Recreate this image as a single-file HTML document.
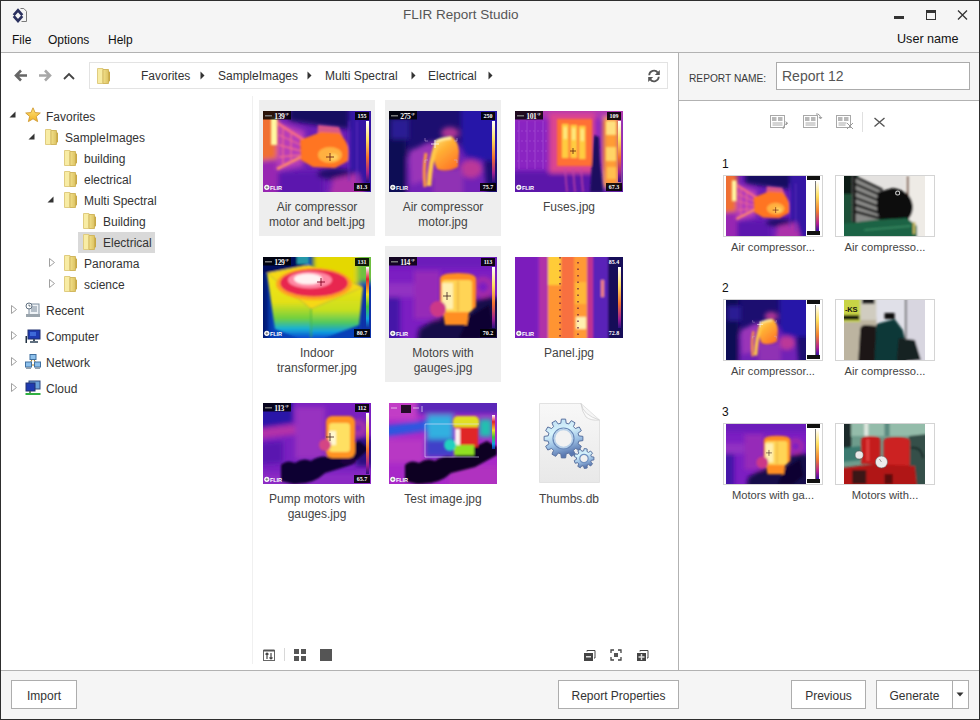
<!DOCTYPE html>
<html><head><meta charset="utf-8">
<style>
*{box-sizing:border-box}
html,body{margin:0;padding:0}
body{width:980px;height:720px;overflow:hidden;position:relative;background:#f5f5f5;font-family:"Liberation Sans",sans-serif;color:#333}
.a{position:absolute}
.t{position:absolute;white-space:nowrap;font-size:12px;line-height:12px}
svg{display:block;overflow:hidden}
.ov{font-family:"Liberation Sans",sans-serif;font-weight:bold}
</style></head><body>

<svg width="0" height="0" style="position:absolute;left:0;top:0"><defs>
<filter id="bA" x="-20%" y="-20%" width="140%" height="140%"><feGaussianBlur stdDeviation="1.3"/></filter>
<filter id="bB" x="-20%" y="-20%" width="140%" height="140%"><feGaussianBlur stdDeviation="2.6"/></filter>
<filter id="bC" x="-20%" y="-20%" width="140%" height="140%"><feGaussianBlur stdDeviation="0.8"/></filter>
<symbol id="s1" viewBox="0 0 108 81">
<rect width="108" height="81" fill="#6e1eb6"/>
<g filter="url(#bB)">
 <path d="M26 -5 L100 -5 L100 20 L60 15 L26 10Z" fill="#140860"/>
 <rect x="86" y="-5" width="27" height="90" fill="#3412a4"/>
 <path d="M-5 62 L60 60 L60 86 L-5 86Z" fill="#5c18ae"/>
 <path d="M-5 -5 L15 -5 L15 48 L-5 52Z" fill="#f07030"/>
 <path d="M-5 50 L15 48 L15 86 L-5 86Z" fill="#9826b2"/>
 <path d="M14 10 L42 20 L40 55 L14 60Z" fill="#b83cb8"/>
 <ellipse cx="72" cy="63" rx="18" ry="6" fill="#220a6c"/>
 <path d="M70 68 L95 62 L102 86 L66 86Z" fill="#ac32aa"/>
</g>
<g filter="url(#bA)">
 <rect x="8" y="6" width="6" height="28" fill="#fff8a0"/>
 <path d="M14 12 L41 29" stroke="#f46a88" stroke-width="3"/>
 <path d="M14 58 L38 46" stroke="#ff8a6a" stroke-width="3"/>
 <path d="M16 24 L38 34 M16 34 L38 40 M16 46 L38 44 M20 16 L20 56 M28 20 L28 52" stroke="#f06a90" stroke-width="1.3"/>
 <path d="M55 14 L76 16 L80 26 L54 27Z" fill="#d85888"/>
 <path d="M37 29 L58 21 L76 22 Q89 34 85 50 L72 57 L50 56 L38 49Z" fill="#ff7424"/>
 <ellipse cx="67" cy="44" rx="12" ry="8" fill="#ffb040"/>
 <ellipse cx="70" cy="46" rx="5" ry="3.5" fill="#ffd060"/>
 <path d="M86 10 V70 M94 10 V75" stroke="#6a30c0" stroke-width="1"/>
</g>
<path d="M63 46 H71 M67 42 V50" stroke="#702010" stroke-width=".9"/>
</symbol>
<symbol id="ovs1" viewBox="0 0 108 81">
<linearGradient id="bars1" x1="0" y1="0" x2="0" y2="1"><stop offset="0" stop-color="#fff"/><stop offset=".3" stop-color="#ffe060"/><stop offset=".6" stop-color="#f07030"/><stop offset=".85" stop-color="#a02090"/><stop offset="1" stop-color="#301080"/></linearGradient>
<rect x="0" y="0" width="28" height="8.5" fill="#000" opacity=".82"/>
<rect x="2" y="4" width="7" height="1.5" fill="#777"/>
<text x="11.3" y="7.9" font-size="7.6" fill="#f4f4f4" font-family="Liberation Serif" font-weight="bold" letter-spacing="-.45">139</text>
<text x="22" y="4.6" font-size="3.6" fill="#ddd" font-family="Liberation Sans" font-weight="bold">°F</text>
<rect x="92" y="1" width="14" height="8" fill="#000" opacity=".88"/>
<text x="99" y="7.3" font-size="6" fill="#fff" text-anchor="middle" font-family="Liberation Serif" font-weight="bold">155</text>
<rect x="103" y="10" width="3" height="61" fill="url(#bars1)"/>
<rect x="91" y="72" width="16" height="8" fill="#000" opacity=".88"/>
<text x="99" y="78.3" font-size="6" fill="#fff" text-anchor="middle" font-family="Liberation Serif" font-weight="bold">81.3</text>
<circle cx="3.8" cy="76.3" r="2.6" fill="#fff"/><path d="M2.3 76.3 H5.3 M3.8 74.8 V77.8" stroke="#444" stroke-width=".6"/>
<text x="7" y="78.6" font-size="5.6" fill="#fff" class="ov" letter-spacing="-.15">FLIR</text>
</symbol>
<symbol id="s2" viewBox="0 0 108 81">
<rect width="108" height="81" fill="#1c0e70"/>
<g filter="url(#bB)">
 <rect x="-5" y="-5" width="22" height="90" fill="#100a54"/>
 <rect x="2" y="8" width="18" height="20" fill="#2c1a94"/>
 <rect x="72" y="-5" width="40" height="55" fill="#2814a8"/>
 <path d="M18 46 L36 32 L68 30 L76 46 L95 50 L98 86 L18 86Z" fill="#7220b6"/>
 <path d="M20 40 L44 30 L46 66 L22 74Z" fill="#9a34b8"/>
 <ellipse cx="61" cy="22" rx="9" ry="6" fill="#ac3494"/>
 <ellipse cx="82" cy="58" rx="11" ry="9" fill="#bc3898"/>
 <rect x="44" y="58" width="30" height="26" fill="#9030b4"/>
</g>
<linearGradient id="s2m" x1="0" y1="0" x2=".6" y2="1"><stop offset="0" stop-color="#ffe878"/><stop offset=".45" stop-color="#ffb034"/><stop offset="1" stop-color="#ff7a28"/></linearGradient>
<g filter="url(#bA)">
 <path d="M44 36 Q50 27 62 25 Q69 29 70 40 L69 56 Q58 62 48 58 Q44 50 44 36Z" fill="url(#s2m)"/>
 <path d="M37 42 Q34 58 36 76" stroke="#ff9a40" stroke-width="3" fill="none"/>
 <path d="M48 32 Q41 50 40 75" stroke="#ffc848" stroke-width="4.5" fill="none"/>
 <path d="M46 31 Q54 27 62 27" stroke="#fff0a0" stroke-width="3" fill="none"/>
</g>
<path d="M42 33 H50 M46 29 V37" stroke="#fff" stroke-width=".8"/>
<path d="M36 27 V30 H39 M68 27 V30 H65 M36 52 V49 H39 M68 52 V49 H65" stroke="#d0b0e0" stroke-width=".5" fill="none"/>
</symbol>
<symbol id="ovs2" viewBox="0 0 108 81">
<linearGradient id="bars2" x1="0" y1="0" x2="0" y2="1"><stop offset="0" stop-color="#fff"/><stop offset=".3" stop-color="#ffe060"/><stop offset=".6" stop-color="#f07030"/><stop offset=".85" stop-color="#a02090"/><stop offset="1" stop-color="#301080"/></linearGradient>
<rect x="0" y="0" width="28" height="8.5" fill="#000" opacity=".82"/>
<rect x="2" y="4" width="7" height="1.5" fill="#777"/>
<text x="11.3" y="7.9" font-size="7.6" fill="#f4f4f4" font-family="Liberation Serif" font-weight="bold" letter-spacing="-.45">275</text>
<text x="22" y="4.6" font-size="3.6" fill="#ddd" font-family="Liberation Sans" font-weight="bold">°F</text>
<rect x="92" y="1" width="14" height="8" fill="#000" opacity=".88"/>
<text x="99" y="7.3" font-size="6" fill="#fff" text-anchor="middle" font-family="Liberation Serif" font-weight="bold">250</text>
<rect x="103" y="10" width="3" height="61" fill="url(#bars2)"/>
<rect x="91" y="72" width="16" height="8" fill="#000" opacity=".88"/>
<text x="99" y="78.3" font-size="6" fill="#fff" text-anchor="middle" font-family="Liberation Serif" font-weight="bold">75.7</text>
<circle cx="3.8" cy="76.3" r="2.6" fill="#fff"/><path d="M2.3 76.3 H5.3 M3.8 74.8 V77.8" stroke="#444" stroke-width=".6"/>
<text x="7" y="78.6" font-size="5.6" fill="#fff" class="ov" letter-spacing="-.15">FLIR</text>
</symbol>
<symbol id="s3" viewBox="0 0 108 81">
<rect width="108" height="81" fill="#8a24c2"/>
<g filter="url(#bB)">
 <rect x="-5" y="-5" width="118" height="12" fill="#b038b0"/>
 <rect x="-5" y="60" width="118" height="26" fill="#5c16aa"/>
 <rect x="34" y="2" width="46" height="60" fill="#dc4490"/>
 <rect x="88" y="6" width="16" height="70" fill="#ff9c34"/>
</g>
<g stroke="#b060d8" stroke-width=".7" opacity=".7">
 <path d="M4 10 V58 M12 10 V58 M20 10 V58 M28 10 V58"/>
 <path d="M2 20 H32 M2 30 H32 M2 40 H32 M2 50 H32" stroke-dasharray="2 2"/>
</g>
<g filter="url(#bA)">
 <rect x="42" y="8" width="35" height="47" fill="#ff7034"/>
 <rect x="47" y="13" width="6.5" height="34" fill="#ffcc40"/>
 <rect x="55.5" y="14" width="6.5" height="33" fill="#ffcc40"/>
 <rect x="64" y="15" width="6.5" height="33" fill="#ffcc40"/>
 <rect x="48.5" y="16" width="3.5" height="12" fill="#ffe880"/>
 <rect x="57" y="17" width="3.5" height="12" fill="#ffe880"/>
 <rect x="65.5" y="18" width="3.5" height="12" fill="#ffe880"/>
 <path d="M79 24 L84 26 L85 50 L88 81 L75 81 L77 50Z" fill="#1e0e5e"/>
 <rect x="91" y="10" width="10" height="14" fill="#ffe080"/>
 <rect x="91" y="36" width="10" height="14" fill="#ffd466"/>
 <rect x="92" y="56" width="9" height="12" fill="#ffc050"/>
 <path d="M50 58 L52 81 M58 58 L60 81 M66 58 L68 81" stroke="#c444a4" stroke-width="1.4"/>
</g>
<path d="M55 40 H61 M58 37 V43" stroke="#602010" stroke-width=".8"/>
</symbol>
<symbol id="ovs3" viewBox="0 0 108 81">
<linearGradient id="bars3" x1="0" y1="0" x2="0" y2="1"><stop offset="0" stop-color="#fff"/><stop offset=".3" stop-color="#ffe060"/><stop offset=".6" stop-color="#f07030"/><stop offset=".85" stop-color="#a02090"/><stop offset="1" stop-color="#301080"/></linearGradient>
<rect x="0" y="0" width="28" height="8.5" fill="#000" opacity=".82"/>
<rect x="2" y="4" width="7" height="1.5" fill="#777"/>
<text x="11.3" y="7.9" font-size="7.6" fill="#f4f4f4" font-family="Liberation Serif" font-weight="bold" letter-spacing="-.45">101</text>
<text x="22" y="4.6" font-size="3.6" fill="#ddd" font-family="Liberation Sans" font-weight="bold">°F</text>
<rect x="92" y="1" width="14" height="8" fill="#000" opacity=".88"/>
<text x="99" y="7.3" font-size="6" fill="#fff" text-anchor="middle" font-family="Liberation Serif" font-weight="bold">109</text>
<rect x="103" y="10" width="3" height="61" fill="url(#bars3)"/>
<rect x="91" y="72" width="16" height="8" fill="#000" opacity=".88"/>
<text x="99" y="78.3" font-size="6" fill="#fff" text-anchor="middle" font-family="Liberation Serif" font-weight="bold">67.3</text>
<circle cx="3.8" cy="76.3" r="2.6" fill="#fff"/><path d="M2.3 76.3 H5.3 M3.8 74.8 V77.8" stroke="#444" stroke-width=".6"/>
<text x="7" y="78.6" font-size="5.6" fill="#fff" class="ov" letter-spacing="-.15">FLIR</text>
</symbol>
<symbol id="s4" viewBox="0 0 108 81">
<linearGradient id="s4l" gradientUnits="userSpaceOnUse" x1="0" y1="16" x2="0" y2="81"><stop offset="0" stop-color="#f4e414"/><stop offset=".45" stop-color="#e4e018"/><stop offset=".7" stop-color="#70d040"/><stop offset=".86" stop-color="#18b0d8"/><stop offset="1" stop-color="#0848d0"/></linearGradient>
<linearGradient id="s4f" gradientUnits="userSpaceOnUse" x1="0" y1="30" x2="0" y2="81"><stop offset="0" stop-color="#f0e010"/><stop offset=".45" stop-color="#c8e020"/><stop offset=".7" stop-color="#50c860"/><stop offset=".88" stop-color="#10a0e0"/><stop offset="1" stop-color="#0a50d0"/></linearGradient>
<rect width="108" height="81" fill="#0840b8"/>
<g filter="url(#bB)">
 <rect x="50" y="-5" width="46" height="34" fill="#e4d800"/>
 <rect x="94" y="-5" width="19" height="30" fill="#70c040"/>
 <rect x="96" y="28" width="17" height="58" fill="#0830a8"/>
 <rect x="-5" y="-5" width="10" height="90" fill="#001870"/>
</g>
<g filter="url(#bC)">
 <path d="M-5 -5 L42 -5 L42 9 L4 16 L-5 16Z" fill="#000c5c"/>
 <rect x="34" y="-5" width="12" height="12" fill="#2898a8"/>
 <path d="M4 16 L48 52 L48 86 L12 72 Z" fill="url(#s4l)"/>
 <path d="M48 52 L100 30 L96 68 L48 86Z" fill="url(#s4f)"/>
 <path d="M4 16 L46 8 L100 30 L48 52Z" fill="#f6d818"/>
</g>
<g filter="url(#bA)">
 <ellipse cx="51" cy="27" rx="38" ry="16" fill="#ffa024"/>
 <ellipse cx="51" cy="26" rx="34" ry="13.5" fill="#e82650"/>
 <ellipse cx="47" cy="23" rx="22" ry="8.5" fill="#ff88a4"/>
 <ellipse cx="45" cy="22" rx="14" ry="5.5" fill="#fff2f2"/>
 <path d="M48 52 V81" stroke="#40b040" stroke-width="1"/>
</g>
<path d="M54 25 H62 M58 21 V29" stroke="#800020" stroke-width=".9"/>
</symbol>
<symbol id="ovs4" viewBox="0 0 108 81">
<linearGradient id="bars4" x1="0" y1="0" x2="0" y2="1"><stop offset="0" stop-color="#fff"/><stop offset=".2" stop-color="#e02030"/><stop offset=".45" stop-color="#f0e020"/><stop offset=".65" stop-color="#40c040"/><stop offset=".85" stop-color="#10a0e0"/><stop offset="1" stop-color="#1030a0"/></linearGradient>
<rect x="0" y="0" width="28" height="8.5" fill="#000" opacity=".82"/>
<rect x="2" y="4" width="7" height="1.5" fill="#777"/>
<text x="11.3" y="7.9" font-size="7.6" fill="#f4f4f4" font-family="Liberation Serif" font-weight="bold" letter-spacing="-.45">129</text>
<text x="22" y="4.6" font-size="3.6" fill="#ddd" font-family="Liberation Sans" font-weight="bold">°F</text>
<rect x="92" y="1" width="14" height="8" fill="#000" opacity=".88"/>
<text x="99" y="7.3" font-size="6" fill="#fff" text-anchor="middle" font-family="Liberation Serif" font-weight="bold">131</text>
<rect x="103" y="10" width="3" height="61" fill="url(#bars4)"/>
<rect x="91" y="72" width="16" height="8" fill="#000" opacity=".88"/>
<text x="99" y="78.3" font-size="6" fill="#fff" text-anchor="middle" font-family="Liberation Serif" font-weight="bold">80.7</text>
<circle cx="3.8" cy="76.3" r="2.6" fill="#fff"/><path d="M2.3 76.3 H5.3 M3.8 74.8 V77.8" stroke="#444" stroke-width=".6"/>
<text x="7" y="78.6" font-size="5.6" fill="#fff" class="ov" letter-spacing="-.15">FLIR</text>
</symbol>
<symbol id="s5" viewBox="0 0 108 81">
<rect width="108" height="81" fill="#7c1ec2"/>
<g filter="url(#bB)">
 <rect x="-5" y="-5" width="118" height="16" fill="#6c1aba"/>
 <path d="M30 72 L70 48 L100 40 L113 42 L113 86 L28 86Z" fill="#140848"/>
 <rect x="-5" y="40" width="16" height="46" fill="#4414a8"/>
 <rect x="-5" y="26" width="30" height="14" fill="#9232c2"/>
 <rect x="25" y="14" width="26" height="48" fill="#962ab8"/>
 <ellipse cx="94" cy="30" rx="8" ry="8" fill="none" stroke="#c83494" stroke-width="3"/>
</g>
<g filter="url(#bA)">
 <path d="M80 60 L100 48 L104 70 L90 81 L70 81Z" fill="#0c0430"/>
 <path d="M51 22 Q51 16 69 16 Q87 16 87 22 L87 50 L80 56 L78 68 L56 68 L54 56 L51 52Z" fill="#ff8e22"/>
 <rect x="53" y="23" width="30" height="32" rx="3" fill="#ffd454"/>
 <rect x="53" y="26" width="11" height="26" fill="#fff0b0"/>
 <path d="M69 24 V54" stroke="#e0a040" stroke-width="1"/>
 <circle cx="49" cy="52" r="8" fill="#cc3888"/>
</g>
<path d="M54 39 H62 M58 35 V43" stroke="#402020" stroke-width=".8"/>
</symbol>
<symbol id="ovs5" viewBox="0 0 108 81">
<linearGradient id="bars5" x1="0" y1="0" x2="0" y2="1"><stop offset="0" stop-color="#fff"/><stop offset=".3" stop-color="#ffe060"/><stop offset=".6" stop-color="#f07030"/><stop offset=".85" stop-color="#a02090"/><stop offset="1" stop-color="#301080"/></linearGradient>
<rect x="0" y="0" width="28" height="8.5" fill="#000" opacity=".82"/>
<rect x="2" y="4" width="7" height="1.5" fill="#777"/>
<text x="11.3" y="7.9" font-size="7.6" fill="#f4f4f4" font-family="Liberation Serif" font-weight="bold" letter-spacing="-.45">114</text>
<text x="22" y="4.6" font-size="3.6" fill="#ddd" font-family="Liberation Sans" font-weight="bold">°F</text>
<rect x="92" y="1" width="14" height="8" fill="#000" opacity=".88"/>
<text x="99" y="7.3" font-size="6" fill="#fff" text-anchor="middle" font-family="Liberation Serif" font-weight="bold">113</text>
<rect x="103" y="10" width="3" height="61" fill="url(#bars5)"/>
<rect x="91" y="72" width="16" height="8" fill="#000" opacity=".88"/>
<text x="99" y="78.3" font-size="6" fill="#fff" text-anchor="middle" font-family="Liberation Serif" font-weight="bold">70.2</text>
<circle cx="3.8" cy="76.3" r="2.6" fill="#fff"/><path d="M2.3 76.3 H5.3 M3.8 74.8 V77.8" stroke="#444" stroke-width=".6"/>
<text x="7" y="78.6" font-size="5.6" fill="#fff" class="ov" letter-spacing="-.15">FLIR</text>
</symbol>
<symbol id="s6" viewBox="0 0 108 81">
<rect width="108" height="81" fill="#8420c0"/>
<g filter="url(#bC)">
 <rect x="-2" y="-2" width="24" height="85" fill="#7c1cbc"/>
 <rect x="24" y="-2" width="9" height="85" fill="#b030a8"/>
 <rect x="33" y="-2" width="13" height="85" fill="#ff9432"/>
 <rect x="33" y="-2" width="13" height="30" fill="#ffcc38"/>
 <rect x="46" y="-2" width="13" height="85" fill="#f87040"/>
 <rect x="59" y="-2" width="13" height="85" fill="#ff9a34"/>
 <rect x="60" y="25" width="11" height="22" fill="#ffb838"/>
 <rect x="61" y="60" width="10" height="12" fill="#fff0b0"/>
 <rect x="72" y="-2" width="6" height="85" fill="#c03090"/>
 <rect x="78" y="-2" width="15" height="85" fill="#5a20b8"/>
 <rect x="93" y="-2" width="17" height="85" fill="#140a58"/>
 <rect x="86" y="23" width="3" height="17" fill="#f08080"/>
</g>
<path d="M45 0 V81 M63 5 V81" stroke="#601040" stroke-width="1.2" stroke-dasharray="1.5 5"/>
</symbol>
<symbol id="ovs6" viewBox="0 0 108 81">
<linearGradient id="bars6" x1="0" y1="0" x2="0" y2="1"><stop offset="0" stop-color="#fff"/><stop offset=".3" stop-color="#ffe060"/><stop offset=".6" stop-color="#f07030"/><stop offset=".85" stop-color="#a02090"/><stop offset="1" stop-color="#301080"/></linearGradient>
<text x="99" y="7.3" font-size="6" fill="#fff" text-anchor="middle" font-family="Liberation Serif" font-weight="bold">85.4</text>
<rect x="103" y="10" width="3" height="61" fill="url(#bars6)"/>
<text x="99" y="78.3" font-size="6" fill="#fff" text-anchor="middle" font-family="Liberation Serif" font-weight="bold">72.8</text>
<circle cx="3.8" cy="76.3" r="2.6" fill="#fff"/><path d="M2.3 76.3 H5.3 M3.8 74.8 V77.8" stroke="#444" stroke-width=".6"/><text x="7" y="78.6" font-size="5.6" fill="#fff" class="ov" letter-spacing="-.15">FLIR</text>
</symbol>
<symbol id="s7" viewBox="0 0 108 81">
<rect width="108" height="81" fill="#7a20c0"/>
<g filter="url(#bB)">
 <path d="M-5 -5 L30 -5 L30 20 L-5 26Z" fill="#2c12a8"/>
 <path d="M-5 26 L62 18 L62 28 L-5 36Z" fill="#b432a8"/>
 <rect x="32" y="4" width="30" height="52" fill="#9830c0"/>
 <path d="M-5 40 L20 38 L20 60 L-5 62Z" fill="#5a18b0"/>
 <rect x="93" y="35" width="17" height="28" fill="#2a1080"/>
 <circle cx="95" cy="25" r="6" fill="none" stroke="#c44494" stroke-width="3"/>
 <rect x="-5" y="70" width="118" height="16" fill="#8c2cc4"/>
</g>
<g filter="url(#bA)">
 <path d="M18 62 Q24 56 32 60 Q40 54 48 58 Q56 52 66 54 L96 38 L106 46 L88 62 L62 70 Q50 82 30 81 L18 78Z" fill="#100230"/>
 <ellipse cx="85" cy="58" rx="8" ry="4" fill="#1a0640"/>
 <rect x="63" y="13" width="29" height="42" rx="6" fill="#ff9222"/>
 <rect x="66" y="20" width="21" height="29" rx="3" fill="#ffe062"/>
 <rect x="66" y="28" width="7" height="14" fill="#fff8d0"/>
 <circle cx="62" cy="42" r="6" fill="#d44484"/>
</g>
<path d="M63 34 H71 M67 30 V38" stroke="#402020" stroke-width=".8"/>
</symbol>
<symbol id="ovs7" viewBox="0 0 108 81">
<linearGradient id="bars7" x1="0" y1="0" x2="0" y2="1"><stop offset="0" stop-color="#fff"/><stop offset=".3" stop-color="#ffe060"/><stop offset=".6" stop-color="#f07030"/><stop offset=".85" stop-color="#a02090"/><stop offset="1" stop-color="#301080"/></linearGradient>
<rect x="0" y="0" width="28" height="8.5" fill="#000" opacity=".82"/>
<rect x="2" y="4" width="7" height="1.5" fill="#777"/>
<text x="11.3" y="7.9" font-size="7.6" fill="#f4f4f4" font-family="Liberation Serif" font-weight="bold" letter-spacing="-.45">113</text>
<text x="22" y="4.6" font-size="3.6" fill="#ddd" font-family="Liberation Sans" font-weight="bold">°F</text>
<rect x="92" y="1" width="14" height="8" fill="#000" opacity=".88"/>
<text x="99" y="7.3" font-size="6" fill="#fff" text-anchor="middle" font-family="Liberation Serif" font-weight="bold">112</text>
<rect x="103" y="10" width="3" height="61" fill="url(#bars7)"/>
<rect x="91" y="72" width="16" height="8" fill="#000" opacity=".88"/>
<text x="99" y="78.3" font-size="6" fill="#fff" text-anchor="middle" font-family="Liberation Serif" font-weight="bold">65.7</text>
<circle cx="3.8" cy="76.3" r="2.6" fill="#fff"/><path d="M2.3 76.3 H5.3 M3.8 74.8 V77.8" stroke="#444" stroke-width=".6"/>
<text x="7" y="78.6" font-size="5.6" fill="#fff" class="ov" letter-spacing="-.15">FLIR</text>
</symbol>
<symbol id="s8" viewBox="0 0 108 81">
<rect width="108" height="81" fill="#a828c8"/>
<g filter="url(#bB)">
 <rect x="28" y="-5" width="85" height="16" fill="#5a26b8"/>
 <rect x="-5" y="-5" width="33" height="22" fill="#c23cc6"/>
 <path d="M-5 23 L40 17 L40 27 L-5 34Z" fill="#2a58e0"/>
 <rect x="-5" y="36" width="40" height="24" fill="#b838c4"/>
 <rect x="38" y="12" width="26" height="28" fill="#30b0e0"/>
 <rect x="36" y="36" width="30" height="18" fill="#4040c8"/>
 <rect x="90" y="16" width="13" height="18" fill="#20c0b0"/>
 <rect x="60" y="62" width="50" height="22" fill="#b030c0"/>
</g>
<g filter="url(#bA)">
 <path d="M16 62 Q22 56 30 60 Q38 54 46 58 Q54 52 64 54 L98 38 L108 44 L108 52 L86 64 L62 70 Q50 82 28 81 L16 78Z" fill="#080020"/>
 <rect x="64" y="13" width="26" height="13" rx="5" fill="#e0e020"/>
 <rect x="66" y="24" width="23" height="20" fill="#e02828"/>
 <rect x="66" y="26" width="5" height="16" fill="#fff0f0"/>
 <rect x="65" y="42" width="20" height="10" fill="#90e020"/>
 <circle cx="61" cy="42" r="6" fill="#20d0c0"/>
</g>
<path d="M36 21 H90 M36 54 H90 M36 21 V54" stroke="#e0e0ff" stroke-width=".6" fill="none"/>
<rect x="12" y="2" width="10" height="8" fill="#000" opacity=".8"/>
<path d="M2 5 H8 M24 5 H30 M33 3 V9" stroke="#fff" stroke-width=".8" opacity=".8"/>
<rect x="103" y="12" width="3" height="34" fill="url(#bars4)"/>
<circle cx="3.8" cy="76.3" r="2.6" fill="#fff"/><path d="M2.3 76.3 H5.3 M3.8 74.8 V77.8" stroke="#444" stroke-width=".6"/><text x="7" y="78.6" font-size="5.6" fill="#fff" class="ov" letter-spacing="-.15">FLIR</text>
</symbol>
<symbol id="ovs8" viewBox="0 0 108 81"></symbol>
<symbol id="p1" viewBox="0 0 80 60">
<rect width="80" height="60" fill="#e4e2e0"/>
<g filter="url(#bA)">
 <rect x="60" y="-2" width="22" height="64" fill="#eeebe6"/>
 <rect x="-2" y="-2" width="16" height="64" fill="#1a5038"/>
 <rect x="-2" y="-2" width="10" height="20" fill="#0e1a16"/>
 <path d="M8 -2 L38 12 L38 44 L16 50 L8 46Z" fill="#8a8a88"/>
 <path d="M9 0 L38 14 M9 7 L38 20 M9 14 L38 26 M9 21 L38 32 M9 28 L38 38 M9 35 L38 43" stroke="#141414" stroke-width="2.4"/>
 <path d="M10 -2 L10 48" stroke="#101010" stroke-width="3"/>
 <rect x="62" y="0" width="2" height="44" fill="#7a5848"/>
 <path d="M48 12 Q66 14 68 30 Q68 46 52 48 L36 46 Q30 30 34 16Z" fill="#0a0a0a"/>
 <path d="M-2 48 L30 44 L62 42 L72 50 L72 62 L-2 62Z" fill="#1c6444"/>
 <path d="M20 54 L66 50" stroke="#3a8a64" stroke-width="1.5"/>
 <rect x="68" y="46" width="2.5" height="12" fill="#c8b860"/>
</g>
<circle cx="53" cy="17" r="2" fill="none" stroke="#ccc" stroke-width="1"/>
</symbol>
<symbol id="p2" viewBox="0 0 80 60">
<rect width="80" height="60" fill="#e0e0e8"/>
<g filter="url(#bA)">
 <rect x="62" y="-2" width="20" height="64" fill="#d8d6e0"/>
 <rect x="-2" y="18" width="34" height="44" fill="#bcb4a0"/>
 <rect x="-2" y="-2" width="34" height="22" fill="#d0ccc0"/>
 <rect x="-2" y="-2" width="18" height="24" fill="#c8d444"/>
 <rect x="-2" y="15" width="17" height="5" fill="#1c2010"/>
 <rect x="18" y="-2" width="12" height="6" fill="#222"/>
 <path d="M16 30 Q16 25 22 25 L32 26 L32 62 L14 62Z" fill="#1a1818"/>
 <path d="M32 24 L50 19 L58 30 L62 46 L62 62 L30 62Z" fill="#0e3838"/>
 <rect x="40" y="13" width="10" height="6" fill="#111"/>
 <path d="M54 38 L70 40 L76 60 L52 62Z" fill="#182222"/>
 <rect x="60.5" y="-2" width="1.5" height="42" fill="#555"/>
</g>
<text x="1" y="12" font-size="7.5" fill="#1a1a10" class="ov" letter-spacing="-.3">-KS</text>
</symbol>
<symbol id="p3" viewBox="0 0 80 60">
<rect width="80" height="60" fill="#6e9c8c"/>
<g filter="url(#bA)">
 <rect x="-2" y="-2" width="84" height="14" fill="#94bcaa"/>
 <rect x="-2" y="-2" width="9" height="27" fill="#1a2a2a"/>
 <rect x="20" y="-2" width="4" height="14" fill="#e0e8e0"/>
 <rect x="40" y="-2" width="5" height="14" fill="#5a8a80"/>
 <path d="M64 12 L82 10 L82 62 L64 62Z" fill="#34504a"/>
 <path d="M-2 24 L18 22 L18 36 L-2 38Z" fill="#3a7a70"/>
 <path d="M17 16 Q17 12 26 12 Q36 12 36 16 L36 40 L17 40Z" fill="#c41a1a"/>
 <path d="M39 17 Q39 13 52 13 Q65 13 65 17 L65 46 L39 46Z" fill="#cc2020"/>
 <rect x="22" y="15" width="3" height="22" fill="#e04040"/>
 <path d="M-2 44 L30 40 L70 42 L72 62 L-2 62Z" fill="#b01414"/>
 <rect x="8" y="46" width="14" height="14" fill="#3a1818"/>
 <rect x="40" y="50" width="8" height="10" fill="#5a1010"/>
 <path d="M66 24 Q76 22 78 34" stroke="#1a2a28" stroke-width="2" fill="none"/>
</g>
<circle cx="15" cy="31" r="4" fill="#e8e8e8" stroke="#555" stroke-width=".5"/>
<circle cx="37" cy="38" r="6" fill="#ececec" stroke="#666" stroke-width=".6"/>
<path d="M37 38 L35 35" stroke="#444" stroke-width=".5"/>
</symbol>
</defs></svg>
<div class="a" style="left:0;top:0;width:980px;height:720px;border:1px solid #2e2e2e;z-index:50"></div>
<svg class="a" style="left:0;top:0" width="30" height="30" viewBox="0 0 30 30">
  <path d="M20.5 8.5 H23.8 L26.5 11.3 V21.5 H21.5" stroke="#7a7a7a" stroke-width="1" fill="none"/>
  <path d="M14.6 14.1 L18 10.3 L21.4 14.1 M14.6 17.1 L18 20.9 L21.4 17.1" stroke="#2b315f" stroke-width="2.7" fill="none" stroke-linejoin="miter" stroke-linecap="square"/>
</svg>
<div class="t" style="left:403px;top:8px;font-size:13.5px;line-height:13.5px;color:#555;">FLIR Report Studio</div>
<div class="a" style="left:894px;top:16px;width:10px;height:3px;background:#333"></div>
<div class="a" style="left:926px;top:10px;width:10px;height:10px;border:1px solid #333;border-top-width:3px"></div>
<svg class="a" style="left:957px;top:10px" width="11" height="10" viewBox="0 0 11 10"><path d="M1 0.5 L10 9.5 M10 0.5 L1 9.5" stroke="#333" stroke-width="1.3"/></svg>
<div class="t" style="left:12px;top:34px;font-size:12px;line-height:12px;color:#111;">File</div>
<div class="t" style="left:48px;top:34px;font-size:12px;line-height:12px;color:#111;">Options</div>
<div class="t" style="left:108px;top:34px;font-size:12px;line-height:12px;color:#111;">Help</div>
<div class="t" style="left:897px;top:33px;font-size:12.6px;line-height:12.6px;color:#111;">User name</div>
<div class="a" style="left:0;top:52px;width:980px;height:1px;background:#b2b2b2"></div>
<div class="a" style="left:1px;top:53px;width:677px;height:617px;background:#fff"></div>
<div class="a" style="left:678px;top:53px;width:1px;height:617px;background:#b2b2b2"></div>
<div class="a" style="left:679px;top:53px;width:300px;height:47px;background:#f5f5f5"></div>
<div class="a" style="left:679px;top:100px;width:300px;height:1px;background:#b2b2b2"></div>
<div class="a" style="left:679px;top:101px;width:300px;height:569px;background:#fff"></div>
<div class="a" style="left:0;top:670px;width:980px;height:1px;background:#b2b2b2"></div>
<div class="a" style="left:252px;top:96px;width:1px;height:568px;background:#f0f0f0"></div>
<svg class="a" style="left:14px;top:69px" width="64" height="14" viewBox="0 0 64 14">
 <path d="M2 6.5 H13 M7 1.5 L2 6.5 L7 11.5" stroke="#666" stroke-width="2.6" fill="none"/>
 <path d="M25 6.5 H36 M31 1.5 L36 6.5 L31 11.5" stroke="#a8a8a8" stroke-width="2.6" fill="none"/>
 <path d="M50 10 L55 5 L60 10" stroke="#444" stroke-width="1.8" fill="none"/>
</svg>
<div class="a" style="left:89px;top:62px;width:579px;height:27px;border:1px solid #e3e3e3;background:#fff"></div>
<div class="a" style="left:97px;top:68px"><svg width="14" height="16" viewBox="0 0 14 16"><defs><linearGradient id="fg1" x1="0" y1="0" x2="1" y2="0"><stop offset="0" stop-color="#f2e08a"/><stop offset="1" stop-color="#dcc262"/></linearGradient></defs>
<path d="M0.5 0.5 H6 V15.5 H0.5Z" fill="#f8eca4" stroke="#e0cc80" stroke-width="1"/>
<path d="M6 1.5 H11.5 V15.5 H6Z" fill="url(#fg1)" stroke="#d2b860" stroke-width="1"/>
<path d="M11.5 3 L13 4 V13 L11.5 14Z" fill="#c8a844"/>
</svg></div>
<div class="t" style="left:141px;top:70px;font-size:12px;line-height:12px;color:#333;">Favorites</div>
<div class="t" style="left:218px;top:70px;font-size:12px;line-height:12px;color:#333;">SampleImages</div>
<div class="t" style="left:325px;top:70px;font-size:12px;line-height:12px;color:#333;">Multi Spectral</div>
<div class="t" style="left:428px;top:70px;font-size:12px;line-height:12px;color:#333;">Electrical</div>
<svg class="a" style="left:200px;top:71px" width="5" height="9" viewBox="0 0 5 9"><path d="M0.5 0.5 L4.5 4.5 L0.5 8.5Z" fill="#333"/></svg>
<svg class="a" style="left:307px;top:71px" width="5" height="9" viewBox="0 0 5 9"><path d="M0.5 0.5 L4.5 4.5 L0.5 8.5Z" fill="#333"/></svg>
<svg class="a" style="left:411px;top:71px" width="5" height="9" viewBox="0 0 5 9"><path d="M0.5 0.5 L4.5 4.5 L0.5 8.5Z" fill="#333"/></svg>
<svg class="a" style="left:488px;top:71px" width="5" height="9" viewBox="0 0 5 9"><path d="M0.5 0.5 L4.5 4.5 L0.5 8.5Z" fill="#333"/></svg>
<svg class="a" style="left:647px;top:69px" width="14" height="14" viewBox="0 0 14 14">
<path d="M2.2 6.2 A4.8 4.8 0 0 1 10.8 3.6" stroke="#555" stroke-width="1.8" fill="none"/>
<path d="M12.8 1 L12.8 6 L7.8 6 Z" fill="#555"/>
<path d="M11.8 7.8 A4.8 4.8 0 0 1 3.2 10.4" stroke="#555" stroke-width="1.8" fill="none"/>
<path d="M1.2 13 L1.2 8 L6.2 8 Z" fill="#555"/>
</svg>
<svg class="a" style="left:9px;top:111px" width="7" height="7" viewBox="0 0 7 7"><path d="M6.5 0.5 L6.5 6.5 L0.5 6.5 Z" fill="#333"/></svg>
<div class="a" style="left:25px;top:107px"><svg width="16" height="16" viewBox="0 0 16 16"><defs><linearGradient id="stg" x1="0" y1="0" x2="0" y2="1"><stop offset="0" stop-color="#ffe680"/><stop offset="1" stop-color="#f0b020"/></linearGradient></defs>
<path d="M8 0.8 L10.1 5.6 L15.3 6 L11.3 9.4 L12.6 14.6 L8 11.8 L3.4 14.6 L4.7 9.4 L0.7 6 L5.9 5.6 Z" fill="url(#stg)" stroke="#d09a30" stroke-width=".9"/></svg></div>
<div class="t" style="left:46px;top:111px;font-size:12px;line-height:12px;color:#333;">Favorites</div>
<svg class="a" style="left:28px;top:133px" width="7" height="7" viewBox="0 0 7 7"><path d="M6.5 0.5 L6.5 6.5 L0.5 6.5 Z" fill="#333"/></svg>
<div class="a" style="left:45px;top:129px"><svg width="14" height="16" viewBox="0 0 14 16"><defs><linearGradient id="fg2" x1="0" y1="0" x2="1" y2="0"><stop offset="0" stop-color="#f2e08a"/><stop offset="1" stop-color="#dcc262"/></linearGradient></defs>
<path d="M0.5 0.5 H6 V15.5 H0.5Z" fill="#f8eca4" stroke="#e0cc80" stroke-width="1"/>
<path d="M6 1.5 H11.5 V15.5 H6Z" fill="url(#fg2)" stroke="#d2b860" stroke-width="1"/>
<path d="M11.5 3 L13 4 V13 L11.5 14Z" fill="#c8a844"/>
</svg></div>
<div class="t" style="left:65px;top:132px;font-size:12px;line-height:12px;color:#333;">SampleImages</div>
<div class="a" style="left:64px;top:150px"><svg width="14" height="16" viewBox="0 0 14 16"><defs><linearGradient id="fg3" x1="0" y1="0" x2="1" y2="0"><stop offset="0" stop-color="#f2e08a"/><stop offset="1" stop-color="#dcc262"/></linearGradient></defs>
<path d="M0.5 0.5 H6 V15.5 H0.5Z" fill="#f8eca4" stroke="#e0cc80" stroke-width="1"/>
<path d="M6 1.5 H11.5 V15.5 H6Z" fill="url(#fg3)" stroke="#d2b860" stroke-width="1"/>
<path d="M11.5 3 L13 4 V13 L11.5 14Z" fill="#c8a844"/>
</svg></div>
<div class="t" style="left:84px;top:153px;font-size:12px;line-height:12px;color:#333;">building</div>
<div class="a" style="left:64px;top:171px"><svg width="14" height="16" viewBox="0 0 14 16"><defs><linearGradient id="fg4" x1="0" y1="0" x2="1" y2="0"><stop offset="0" stop-color="#f2e08a"/><stop offset="1" stop-color="#dcc262"/></linearGradient></defs>
<path d="M0.5 0.5 H6 V15.5 H0.5Z" fill="#f8eca4" stroke="#e0cc80" stroke-width="1"/>
<path d="M6 1.5 H11.5 V15.5 H6Z" fill="url(#fg4)" stroke="#d2b860" stroke-width="1"/>
<path d="M11.5 3 L13 4 V13 L11.5 14Z" fill="#c8a844"/>
</svg></div>
<div class="t" style="left:84px;top:174px;font-size:12px;line-height:12px;color:#333;">electrical</div>
<svg class="a" style="left:47px;top:196px" width="7" height="7" viewBox="0 0 7 7"><path d="M6.5 0.5 L6.5 6.5 L0.5 6.5 Z" fill="#333"/></svg>
<div class="a" style="left:64px;top:192px"><svg width="14" height="16" viewBox="0 0 14 16"><defs><linearGradient id="fg5" x1="0" y1="0" x2="1" y2="0"><stop offset="0" stop-color="#f2e08a"/><stop offset="1" stop-color="#dcc262"/></linearGradient></defs>
<path d="M0.5 0.5 H6 V15.5 H0.5Z" fill="#f8eca4" stroke="#e0cc80" stroke-width="1"/>
<path d="M6 1.5 H11.5 V15.5 H6Z" fill="url(#fg5)" stroke="#d2b860" stroke-width="1"/>
<path d="M11.5 3 L13 4 V13 L11.5 14Z" fill="#c8a844"/>
</svg></div>
<div class="t" style="left:84px;top:195px;font-size:12px;line-height:12px;color:#333;">Multi Spectral</div>
<div class="a" style="left:83px;top:213px"><svg width="14" height="16" viewBox="0 0 14 16"><defs><linearGradient id="fg6" x1="0" y1="0" x2="1" y2="0"><stop offset="0" stop-color="#f2e08a"/><stop offset="1" stop-color="#dcc262"/></linearGradient></defs>
<path d="M0.5 0.5 H6 V15.5 H0.5Z" fill="#f8eca4" stroke="#e0cc80" stroke-width="1"/>
<path d="M6 1.5 H11.5 V15.5 H6Z" fill="url(#fg6)" stroke="#d2b860" stroke-width="1"/>
<path d="M11.5 3 L13 4 V13 L11.5 14Z" fill="#c8a844"/>
</svg></div>
<div class="t" style="left:103px;top:216px;font-size:12px;line-height:12px;color:#333;">Building</div>
<div class="a" style="left:78px;top:232px;width:77px;height:21px;background:#d9d9d9"></div>
<div class="a" style="left:83px;top:234px"><svg width="14" height="16" viewBox="0 0 14 16"><defs><linearGradient id="fg7" x1="0" y1="0" x2="1" y2="0"><stop offset="0" stop-color="#f2e08a"/><stop offset="1" stop-color="#dcc262"/></linearGradient></defs>
<path d="M0.5 0.5 H6 V15.5 H0.5Z" fill="#f8eca4" stroke="#e0cc80" stroke-width="1"/>
<path d="M6 1.5 H11.5 V15.5 H6Z" fill="url(#fg7)" stroke="#d2b860" stroke-width="1"/>
<path d="M11.5 3 L13 4 V13 L11.5 14Z" fill="#c8a844"/>
</svg></div>
<div class="t" style="left:103px;top:237px;font-size:12px;line-height:12px;color:#333;">Electrical</div>
<svg class="a" style="left:49px;top:258px" width="6" height="9" viewBox="0 0 6 9"><path d="M0.5 0.5 L5.5 4.5 L0.5 8.5 Z" fill="#fff" stroke="#a0a0a0" stroke-width="1"/></svg>
<div class="a" style="left:64px;top:255px"><svg width="14" height="16" viewBox="0 0 14 16"><defs><linearGradient id="fg8" x1="0" y1="0" x2="1" y2="0"><stop offset="0" stop-color="#f2e08a"/><stop offset="1" stop-color="#dcc262"/></linearGradient></defs>
<path d="M0.5 0.5 H6 V15.5 H0.5Z" fill="#f8eca4" stroke="#e0cc80" stroke-width="1"/>
<path d="M6 1.5 H11.5 V15.5 H6Z" fill="url(#fg8)" stroke="#d2b860" stroke-width="1"/>
<path d="M11.5 3 L13 4 V13 L11.5 14Z" fill="#c8a844"/>
</svg></div>
<div class="t" style="left:84px;top:258px;font-size:12px;line-height:12px;color:#333;">Panorama</div>
<svg class="a" style="left:49px;top:279px" width="6" height="9" viewBox="0 0 6 9"><path d="M0.5 0.5 L5.5 4.5 L0.5 8.5 Z" fill="#fff" stroke="#a0a0a0" stroke-width="1"/></svg>
<div class="a" style="left:64px;top:276px"><svg width="14" height="16" viewBox="0 0 14 16"><defs><linearGradient id="fg9" x1="0" y1="0" x2="1" y2="0"><stop offset="0" stop-color="#f2e08a"/><stop offset="1" stop-color="#dcc262"/></linearGradient></defs>
<path d="M0.5 0.5 H6 V15.5 H0.5Z" fill="#f8eca4" stroke="#e0cc80" stroke-width="1"/>
<path d="M6 1.5 H11.5 V15.5 H6Z" fill="url(#fg9)" stroke="#d2b860" stroke-width="1"/>
<path d="M11.5 3 L13 4 V13 L11.5 14Z" fill="#c8a844"/>
</svg></div>
<div class="t" style="left:84px;top:279px;font-size:12px;line-height:12px;color:#333;">science</div>
<svg class="a" style="left:11px;top:305px" width="6" height="9" viewBox="0 0 6 9"><path d="M0.5 0.5 L5.5 4.5 L0.5 8.5 Z" fill="#fff" stroke="#a0a0a0" stroke-width="1"/></svg>
<div class="a" style="left:25px;top:302px"><svg width="16" height="16" viewBox="0 0 16 16">
<rect x="4" y="2" width="10" height="11" fill="#eef2f6" stroke="#8090a0" stroke-width="1"/>
<path d="M6 5 H12 M6 7 H12 M6 9 H12" stroke="#7a8a9a" stroke-width="1"/>
<rect x="1" y="12" width="14" height="3" fill="#9aa4ac"/>
<circle cx="4" cy="4" r="3" fill="#fff" stroke="#607080" stroke-width="1"/>
<path d="M4 2.5 V4 H5.5" stroke="#405060" stroke-width=".8" fill="none"/>
</svg></div>
<div class="t" style="left:46px;top:305px;font-size:12px;line-height:12px;color:#333;">Recent</div>
<svg class="a" style="left:11px;top:331px" width="6" height="9" viewBox="0 0 6 9"><path d="M0.5 0.5 L5.5 4.5 L0.5 8.5 Z" fill="#fff" stroke="#a0a0a0" stroke-width="1"/></svg>
<div class="a" style="left:25px;top:328px"><svg width="16" height="16" viewBox="0 0 16 16">
<rect x="3" y="2" width="12" height="9" fill="#1f3ab0" stroke="#203070" stroke-width="1"/>
<rect x="5" y="4" width="6" height="4" fill="#3e6ad8"/>
<rect x="8" y="11" width="2" height="2" fill="#405060"/>
<rect x="5" y="13" width="8" height="2" fill="#607080"/>
<rect x="0.5" y="8" width="1.5" height="7" fill="#203040"/>
</svg></div>
<div class="t" style="left:46px;top:331px;font-size:12px;line-height:12px;color:#333;">Computer</div>
<svg class="a" style="left:11px;top:357px" width="6" height="9" viewBox="0 0 6 9"><path d="M0.5 0.5 L5.5 4.5 L0.5 8.5 Z" fill="#fff" stroke="#a0a0a0" stroke-width="1"/></svg>
<div class="a" style="left:25px;top:354px"><svg width="16" height="16" viewBox="0 0 16 16">
<path d="M8 4 L4 11 M8 4 L12 11 M4 11 H12" stroke="#b08020" stroke-width="1"/>
<rect x="5" y="0.5" width="6" height="5" fill="#8cc0ec" stroke="#4070a0" stroke-width="1"/>
<rect x="0.5" y="8" width="6" height="5" fill="#8cc0ec" stroke="#4070a0" stroke-width="1"/>
<rect x="9.5" y="8" width="6" height="5" fill="#8cc0ec" stroke="#4070a0" stroke-width="1"/>
<rect x="1" y="13" width="5" height="2" fill="#90a0b0"/>
<rect x="10" y="13" width="5" height="2" fill="#90a0b0"/>
</svg></div>
<div class="t" style="left:46px;top:357px;font-size:12px;line-height:12px;color:#333;">Network</div>
<svg class="a" style="left:11px;top:383px" width="6" height="9" viewBox="0 0 6 9"><path d="M0.5 0.5 L5.5 4.5 L0.5 8.5 Z" fill="#fff" stroke="#a0a0a0" stroke-width="1"/></svg>
<div class="a" style="left:25px;top:380px"><svg width="16" height="16" viewBox="0 0 16 16">
<rect x="4" y="1" width="11" height="8" fill="#6aa0d8" stroke="#304880" stroke-width="1"/>
<rect x="1" y="3" width="9" height="8" fill="#1f3ab0" stroke="#203070" stroke-width="1"/>
<path d="M5 11 V13" stroke="#406040" stroke-width="1.5"/>
<rect x="0.5" y="13" width="15" height="2" fill="#30b040"/>
</svg></div>
<div class="t" style="left:46px;top:383px;font-size:12px;line-height:12px;color:#333;">Cloud</div>
<div class="a" style="left:259px;top:100px;width:116px;height:136px;background:#eeeeee"></div>
<svg class="a" style="left:263px;top:111px" width="108" height="81" viewBox="0 0 108 81"><use href="#s1"/><use href="#ovs1"/></svg>
<div class="t" style="left:259.0px;top:201px;width:116px;text-align:center;font-size:12px;line-height:12px;color:#444;">Air compressor</div>
<div class="t" style="left:259.0px;top:216px;width:116px;text-align:center;font-size:12px;line-height:12px;color:#444;">motor and belt.jpg</div>
<div class="a" style="left:385px;top:100px;width:116px;height:136px;background:#eeeeee"></div>
<svg class="a" style="left:389px;top:111px" width="108" height="81" viewBox="0 0 108 81"><use href="#s2"/><use href="#ovs2"/></svg>
<div class="t" style="left:385.0px;top:201px;width:116px;text-align:center;font-size:12px;line-height:12px;color:#444;">Air compressor</div>
<div class="t" style="left:385.0px;top:216px;width:116px;text-align:center;font-size:12px;line-height:12px;color:#444;">motor.jpg</div>
<svg class="a" style="left:515px;top:111px" width="108" height="81" viewBox="0 0 108 81"><use href="#s3"/><use href="#ovs3"/></svg>
<div class="t" style="left:511.0px;top:201px;width:116px;text-align:center;font-size:12px;line-height:12px;color:#444;">Fuses.jpg</div>
<svg class="a" style="left:263px;top:257px" width="108" height="81" viewBox="0 0 108 81"><use href="#s4"/><use href="#ovs4"/></svg>
<div class="t" style="left:259.0px;top:347px;width:116px;text-align:center;font-size:12px;line-height:12px;color:#444;">Indoor</div>
<div class="t" style="left:259.0px;top:362px;width:116px;text-align:center;font-size:12px;line-height:12px;color:#444;">transformer.jpg</div>
<div class="a" style="left:385px;top:246px;width:116px;height:136px;background:#eeeeee"></div>
<svg class="a" style="left:389px;top:257px" width="108" height="81" viewBox="0 0 108 81"><use href="#s5"/><use href="#ovs5"/></svg>
<div class="t" style="left:385.0px;top:347px;width:116px;text-align:center;font-size:12px;line-height:12px;color:#444;">Motors with</div>
<div class="t" style="left:385.0px;top:362px;width:116px;text-align:center;font-size:12px;line-height:12px;color:#444;">gauges.jpg</div>
<svg class="a" style="left:515px;top:257px" width="108" height="81" viewBox="0 0 108 81"><use href="#s6"/><use href="#ovs6"/></svg>
<div class="t" style="left:511.0px;top:347px;width:116px;text-align:center;font-size:12px;line-height:12px;color:#444;">Panel.jpg</div>
<svg class="a" style="left:263px;top:403px" width="108" height="81" viewBox="0 0 108 81"><use href="#s7"/><use href="#ovs7"/></svg>
<div class="t" style="left:259.0px;top:493px;width:116px;text-align:center;font-size:12px;line-height:12px;color:#444;">Pump motors with</div>
<div class="t" style="left:259.0px;top:508px;width:116px;text-align:center;font-size:12px;line-height:12px;color:#444;">gauges.jpg</div>
<svg class="a" style="left:389px;top:403px" width="108" height="81" viewBox="0 0 108 81"><use href="#s8"/><use href="#ovs8"/></svg>
<div class="t" style="left:385.0px;top:493px;width:116px;text-align:center;font-size:12px;line-height:12px;color:#444;">Test image.jpg</div>
<div class="a" style="left:539px;top:403px"><svg width="64" height="82" viewBox="0 0 64 82">
<defs>
<linearGradient id="pg" x1="0" y1="0" x2="0" y2="1"><stop offset="0" stop-color="#f8f8f8"/><stop offset="1" stop-color="#e8e8e8"/></linearGradient>
<linearGradient id="gg" x1="0" y1="0" x2=".3" y2="1"><stop offset="0" stop-color="#b8d8f0"/><stop offset=".4" stop-color="#d8f4fc"/><stop offset=".7" stop-color="#9cc0e4"/><stop offset="1" stop-color="#5a78b0"/></linearGradient>
</defs>
<path d="M0.5 0.5 H42 L60.5 17 V79.5 H0.5Z" fill="url(#pg)" stroke="#e2e2e2" stroke-width="1"/>
<path d="M42 0.5 Q44 12 60.5 17 Q52 18 47 14 Q43 9 42 0.5Z" fill="#fafafa" stroke="#d0d0d0" stroke-width=".8"/>
<g transform="translate(24.5 35.5)">
 <path d="M15.27 -2.66 L19.38 -2.14 L19.38 2.14 L15.27 2.66 L14.56 5.33 L17.86 7.84 L15.72 11.54 L11.89 9.94 L9.94 11.89 L11.54 15.72 L7.84 17.86 L5.33 14.56 L2.66 15.27 L2.14 19.38 L-2.14 19.38 L-2.66 15.27 L-5.33 14.56 L-7.84 17.86 L-11.54 15.72 L-9.94 11.89 L-11.89 9.94 L-15.72 11.54 L-17.86 7.84 L-14.56 5.33 L-15.27 2.66 L-19.38 2.14 L-19.38 -2.14 L-15.27 -2.66 L-14.56 -5.33 L-17.86 -7.84 L-15.72 -11.54 L-11.89 -9.94 L-9.94 -11.89 L-11.54 -15.72 L-7.84 -17.86 L-5.33 -14.56 L-2.66 -15.27 L-2.14 -19.38 L2.14 -19.38 L2.66 -15.27 L5.33 -14.56 L7.84 -17.86 L11.54 -15.72 L9.94 -11.89 L11.89 -9.94 L15.72 -11.54 L17.86 -7.84 L14.56 -5.33Z" fill="url(#gg)" stroke="#5a72a0" stroke-width="1"/>
 <circle r="10.5" fill="none" stroke="#6a88b8" stroke-width="1.2"/>
 <circle r="9" fill="#f2f2f2" stroke="#b8d0e8" stroke-width="1.5"/>
</g>
<g transform="translate(45 55.5)">
 <path d="M7.40 -1.74 L9.89 -1.46 L9.89 1.46 L7.40 1.74 L6.78 3.43 L8.52 5.24 L6.64 7.48 L4.55 6.09 L2.99 6.99 L3.16 9.49 L0.28 10.00 L-0.42 7.59 L-2.20 7.28 L-3.68 9.30 L-6.21 7.84 L-5.20 5.54 L-6.36 4.16 L-8.80 4.76 L-9.80 2.01 L-7.55 0.90 L-7.55 -0.90 L-9.80 -2.01 L-8.80 -4.76 L-6.36 -4.16 L-5.20 -5.54 L-6.21 -7.84 L-3.68 -9.30 L-2.20 -7.28 L-0.42 -7.59 L0.28 -10.00 L3.16 -9.49 L2.99 -6.99 L4.55 -6.09 L6.64 -7.48 L8.52 -5.24 L6.78 -3.43Z" fill="url(#gg)" stroke="#5a72a0" stroke-width="1"/>
 <circle r="4.2" fill="#f0f0f0" stroke="#7090c0" stroke-width="1.2"/>
</g>
</svg></div>
<div class="t" style="left:511.0px;top:493px;width:116px;text-align:center;font-size:12px;line-height:12px;color:#444;">Thumbs.db</div>
<svg class="a" style="left:262px;top:648px" width="72" height="14" viewBox="0 0 72 14">
<rect x="1.5" y="2.5" width="11" height="10" fill="none" stroke="#666" stroke-width="1"/>
<path d="M1.5 2.5 H12.5" stroke="#555" stroke-width="2"/>
<path d="M5 11 V5 M3.5 6.5 L5 5 L6.5 6.5 M9 5 V11 M7.5 9.5 L9 11 L10.5 9.5" stroke="#444" stroke-width="1.2" fill="none"/>
<rect x="22" y="0" width="1" height="13" fill="#d8d8d8"/>
<rect x="32" y="1" width="5" height="5" fill="#555"/><rect x="39" y="1" width="5" height="5" fill="#555"/>
<rect x="32" y="8" width="5" height="5" fill="#555"/><rect x="39" y="8" width="5" height="5" fill="#555"/>
<rect x="58" y="1" width="12" height="12" fill="#555"/>
</svg>
<svg class="a" style="left:583px;top:649px" width="66" height="13" viewBox="0 0 66 13">
<path d="M4 2.5 V1.5 H12 V9 H11" stroke="#444" stroke-width="1" fill="none"/>
<rect x="1" y="4" width="9" height="8" fill="#444"/>
<rect x="3" y="7" width="5" height="1.5" fill="#ddd"/>
<path d="M28 4 V1 H31 M35 1 H38 V4 M38 8 V11 H35 M31 11 H28 V8" stroke="#444" stroke-width="1.3" fill="none"/>
<rect x="31" y="4" width="4" height="4" fill="#555"/>
<path d="M57 2.5 V1.5 H65 V9 H64" stroke="#444" stroke-width="1" fill="none"/>
<rect x="54" y="4" width="9" height="8" fill="#444"/>
<path d="M58.5 5 V11 M55.5 8 H61.5" stroke="#ddd" stroke-width="1.4"/>
</svg>
<div class="t" style="left:689px;top:73.5px;font-size:10.2px;line-height:10.2px;color:#3a3a3a;">REPORT NAME:</div>
<div class="a" style="left:776px;top:62px;width:194px;height:28px;border:1px solid #ababab;background:#fff"></div>
<div class="t" style="left:782px;top:69px;font-size:14px;line-height:14px;color:#555;">Report 12</div>
<svg class="a" style="left:768px;top:112px" width="120" height="20" viewBox="0 0 120 20">
<g fill="none" stroke="#a8a8a8" stroke-width="1">
<rect x="2.5" y="3.5" width="14" height="12"/>
<path d="M4.5 11 H14.5 M4.5 13 H14.5"/>
</g>
<rect x="4" y="5" width="4.5" height="4" fill="#b8b8b8"/><rect x="10" y="5" width="4.5" height="4" fill="#b8b8b8"/>
<path d="M15 17 Q16 12 19 11 M17.5 9.8 L19.6 11 L18 13" stroke="#999" stroke-width="1" fill="none"/>
<g fill="none" stroke="#a8a8a8" stroke-width="1">
<rect x="35.5" y="3.5" width="14" height="12"/>
<path d="M37.5 11 H47.5 M37.5 13 H47.5"/>
</g>
<rect x="37" y="5" width="4.5" height="4" fill="#b8b8b8"/><rect x="43" y="5" width="4.5" height="4" fill="#b8b8b8"/>
<path d="M48 2 Q52 1.5 52.5 6 M51 5 L52.5 7 L54 5" stroke="#999" stroke-width="1" fill="none"/>
<g fill="none" stroke="#a8a8a8" stroke-width="1">
<rect x="68.5" y="3.5" width="14" height="12"/>
<path d="M70.5 11 H78.5 M70.5 13 H77.5"/>
</g>
<rect x="70" y="5" width="4.5" height="4" fill="#b8b8b8"/><rect x="76" y="5" width="4.5" height="4" fill="#b8b8b8"/>
<path d="M79 11 L85 17 M85 11 L79 17" stroke="#999" stroke-width="1"/>
<rect x="94" y="0" width="1" height="20" fill="#e0e0e0"/>
<path d="M106.5 6 L116.5 14.5 M116.5 6 L106.5 14.5" stroke="#555" stroke-width="1.4"/>
</svg>
<div class="t" style="left:722px;top:158px;font-size:12px;line-height:12px;color:#111;">1</div>
<div class="a" style="left:723px;top:175px;width:100px;height:62px;border:1px solid #d4d4d4;background:#fff"></div>
<svg class="a" style="left:726px;top:176px" width="80" height="60" viewBox="0 0 108 81" preserveAspectRatio="none"><use href="#s1"/></svg>
<div class="a" style="left:806px;top:176px;width:14px;height:60px;background:#fff"></div>
<div class="a" style="left:807px;top:176px;width:13px;height:4px;background:#111"></div>
<div class="a" style="left:807px;top:231px;width:13px;height:4px;background:#111"></div>
<div class="a" style="left:816px;top:181px;width:3px;height:50px;background:linear-gradient(#fff,#ffe060 30%,#f08030 60%,#b02090 85%,#3a10a0)"></div>
<div class="a" style="left:815px;top:181px;width:1px;height:50px;background:#777"></div>
<div class="a" style="left:835px;top:175px;width:100px;height:62px;border:1px solid #d4d4d4;background:#fff"></div>
<svg class="a" style="left:844px;top:176px" width="81" height="60" viewBox="0 0 80 60" preserveAspectRatio="none"><use href="#p1"/></svg>
<div class="t" style="left:718.0px;top:242px;width:110px;text-align:center;font-size:11.2px;line-height:11.2px;color:#444;">Air compressor...</div>
<div class="t" style="left:830.0px;top:242px;width:110px;text-align:center;font-size:11.2px;line-height:11.2px;color:#444;">Air compresso...</div>
<div class="t" style="left:722px;top:282px;font-size:12px;line-height:12px;color:#111;">2</div>
<div class="a" style="left:723px;top:299px;width:100px;height:62px;border:1px solid #d4d4d4;background:#fff"></div>
<svg class="a" style="left:726px;top:300px" width="80" height="60" viewBox="0 0 108 81" preserveAspectRatio="none"><use href="#s2"/></svg>
<div class="a" style="left:806px;top:300px;width:14px;height:60px;background:#fff"></div>
<div class="a" style="left:807px;top:300px;width:13px;height:4px;background:#111"></div>
<div class="a" style="left:807px;top:355px;width:13px;height:4px;background:#111"></div>
<div class="a" style="left:816px;top:305px;width:3px;height:50px;background:linear-gradient(#fff,#ffe060 30%,#f08030 60%,#b02090 85%,#3a10a0)"></div>
<div class="a" style="left:815px;top:305px;width:1px;height:50px;background:#777"></div>
<div class="a" style="left:835px;top:299px;width:100px;height:62px;border:1px solid #d4d4d4;background:#fff"></div>
<svg class="a" style="left:844px;top:300px" width="81" height="60" viewBox="0 0 80 60" preserveAspectRatio="none"><use href="#p2"/></svg>
<div class="t" style="left:718.0px;top:366px;width:110px;text-align:center;font-size:11.2px;line-height:11.2px;color:#444;">Air compressor...</div>
<div class="t" style="left:830.0px;top:366px;width:110px;text-align:center;font-size:11.2px;line-height:11.2px;color:#444;">Air compresso...</div>
<div class="t" style="left:722px;top:406px;font-size:12px;line-height:12px;color:#111;">3</div>
<div class="a" style="left:723px;top:423px;width:100px;height:62px;border:1px solid #d4d4d4;background:#fff"></div>
<svg class="a" style="left:726px;top:424px" width="80" height="60" viewBox="0 0 108 81" preserveAspectRatio="none"><use href="#s5"/></svg>
<div class="a" style="left:806px;top:424px;width:14px;height:60px;background:#fff"></div>
<div class="a" style="left:807px;top:424px;width:13px;height:4px;background:#111"></div>
<div class="a" style="left:807px;top:479px;width:13px;height:4px;background:#111"></div>
<div class="a" style="left:816px;top:429px;width:3px;height:50px;background:linear-gradient(#fff,#ffe060 30%,#f08030 60%,#b02090 85%,#3a10a0)"></div>
<div class="a" style="left:815px;top:429px;width:1px;height:50px;background:#777"></div>
<div class="a" style="left:835px;top:423px;width:100px;height:62px;border:1px solid #d4d4d4;background:#fff"></div>
<svg class="a" style="left:844px;top:424px" width="81" height="60" viewBox="0 0 80 60" preserveAspectRatio="none"><use href="#p3"/></svg>
<div class="t" style="left:718.0px;top:490px;width:110px;text-align:center;font-size:11.2px;line-height:11.2px;color:#444;">Motors with ga...</div>
<div class="t" style="left:830.0px;top:490px;width:110px;text-align:center;font-size:11.2px;line-height:11.2px;color:#444;">Motors with...</div>
<div class="a" style="left:11px;top:680px;width:66px;height:29px;border:1px solid #adadad;background:#fff"></div>
<div class="t" style="left:11.0px;top:690px;width:66px;text-align:center;font-size:12px;line-height:12px;color:#333;">Import</div>
<div class="a" style="left:558px;top:680px;width:121px;height:29px;border:1px solid #adadad;background:#fff"></div>
<div class="t" style="left:558.0px;top:690px;width:121px;text-align:center;font-size:12px;line-height:12px;color:#333;">Report Properties</div>
<div class="a" style="left:791px;top:680px;width:75px;height:29px;border:1px solid #adadad;background:#fff"></div>
<div class="t" style="left:791.0px;top:690px;width:75px;text-align:center;font-size:12px;line-height:12px;color:#333;">Previous</div>
<div class="a" style="left:876px;top:680px;width:93px;height:29px;border:1px solid #adadad;background:#fff"></div>
<div class="t" style="left:876.0px;top:690px;width:77px;text-align:center;font-size:12px;line-height:12px;color:#333;">Generate</div>
<div class="a" style="left:952px;top:680px;width:1px;height:29px;background:#adadad"></div>
<svg class="a" style="left:956px;top:692px" width="8" height="5" viewBox="0 0 8 5"><path d="M0.5 0.5 H7.5 L4 4.5Z" fill="#333"/></svg>
</body></html>
